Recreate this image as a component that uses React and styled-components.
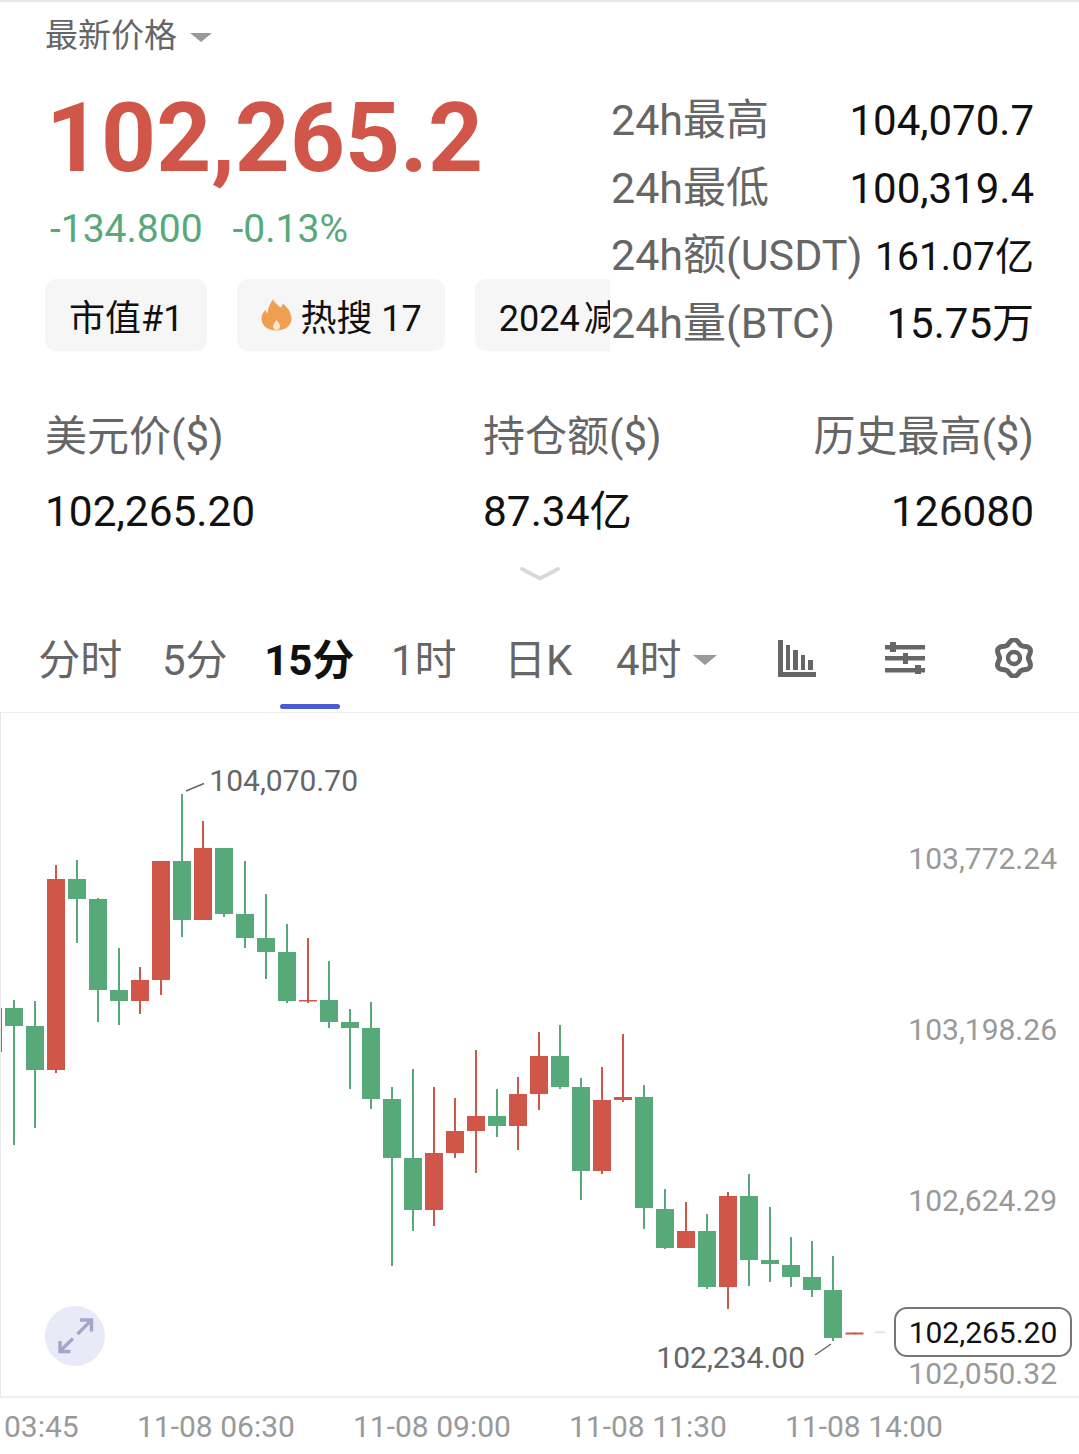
import React from 'react';
import styled, { createGlobalStyle } from 'styled-components';

const GlobalStyle = createGlobalStyle`
  html, body {
    margin: 0;
    padding: 0;
    background: #fff;
  }
  body {
    font-family: Roboto, "Noto Sans CJK SC", sans-serif;
  }
`;

const GREEN = '#58a979';
const RED = '#cf5648';

// x centre, wick top, body top, body bottom, wick bottom
const candles = [
  [-8, 1000, 1008, 1052, 1052, 'r'],
  [13, 1000, 1008, 1026, 1145, 'g'],
  [34, 1001, 1026, 1070, 1128, 'g'],
  [55, 865, 879, 1070, 1073, 'r'],
  [76, 860, 879, 899, 943, 'g'],
  [97, 898, 899, 990, 1022, 'g'],
  [118, 948, 990, 1001, 1025, 'g'],
  [139, 967, 980, 1001, 1014, 'r'],
  [160, 861, 861, 980, 995, 'r'],
  [181, 794, 861, 920, 937, 'g'],
  [202, 821, 848, 920, 920, 'r'],
  [223, 848, 848, 914, 917, 'g'],
  [244, 861, 914, 938, 948, 'g'],
  [265, 894, 938, 952, 979, 'g'],
  [286, 924, 952, 1001, 1003, 'g'],
  [307, 938, 1000, 1001.5, 1003, 'r'],
  [328, 961, 1000, 1022, 1028, 'g'],
  [349, 1009, 1022, 1028, 1089, 'g'],
  [370, 1002, 1028, 1099, 1109, 'g'],
  [391, 1087, 1099, 1158, 1266, 'g'],
  [412, 1069, 1158, 1210, 1231, 'g'],
  [433, 1087, 1153, 1210, 1226, 'r'],
  [454, 1098, 1131, 1153, 1158, 'r'],
  [475, 1050, 1116, 1131, 1173, 'r'],
  [496, 1089, 1116, 1126, 1137, 'g'],
  [517, 1077, 1094, 1126, 1150, 'r'],
  [538, 1032, 1056, 1094, 1110, 'r'],
  [559, 1025, 1056, 1087, 1089, 'g'],
  [580, 1078, 1087, 1171, 1200, 'g'],
  [601, 1067, 1100, 1171, 1174, 'r'],
  [622, 1034, 1097, 1100, 1102, 'r'],
  [643, 1085, 1097, 1208, 1229, 'g'],
  [664, 1189, 1209, 1248, 1249, 'g'],
  [685, 1202, 1231, 1248, 1248, 'r'],
  [706, 1214, 1231, 1287, 1289, 'g'],
  [727, 1192, 1196, 1287, 1309, 'r'],
  [748, 1174, 1196, 1260, 1286, 'g'],
  [769, 1207, 1260, 1264, 1282, 'g'],
  [790, 1237, 1265, 1277, 1287, 'g'],
  [811, 1241, 1277, 1290, 1297, 'g'],
  [832, 1256, 1290, 1338, 1341, 'g'],
  [853.5, 1332.5, 1332.5, 1334.5, 1334.5, 'r'],
];

const gearPath = (() => {
  const pts = [];
  for (let i = 0; i < 72; i++) {
    const a = (i / 72) * Math.PI * 2;
    const r = 16.4 + 2 * Math.cos(6 * a);
    pts.push(`${(20 + r * Math.sin(a)).toFixed(2)} ${(20 - r * Math.cos(a)).toFixed(2)}`);
  }
  return `M${pts.join('L')}Z`;
})();

const Page = styled.div`
  width: 1079px;
  height: 1454px;
  overflow: hidden;
  background: #fff;
  border-top: 2px solid #e8e8e8;
  box-sizing: border-box;
`;

const Header = styled.div`
  display: flex;
  height: 409px;
`;

const PriceColumn = styled.div`
  width: 610px;
  flex-shrink: 0;
  overflow: hidden;
  padding: 11px 0 0 45px;
  box-sizing: border-box;
`;

const PriceLabel = styled.div`
  display: flex;
  align-items: center;
  height: 40px;
  font-size: 33px;
  color: #666;
`;

const Caret = styled.span`
  display: inline-block;
  width: 0;
  height: 0;
  margin-top: ${p => p.$drop}px;
  margin-left: ${p => p.$gap}px;
  border-left: ${p => p.$size}px solid transparent;
  border-right: ${p => p.$size}px solid transparent;
  border-top: ${p => p.$size * 0.85}px solid #999;
`;

const BigPrice = styled.div`
  margin: 29px 0 0 1px;
  font-size: 96px;
  line-height: 112px;
  font-weight: 700;
  color: ${RED};
  white-space: nowrap;
`;

const ChangeRow = styled.div`
  display: flex;
  gap: 30px;
  margin: 12px 0 0 5px;
  font-size: 39px;
  line-height: 46px;
  color: ${GREEN};
`;

const ChipRow = styled.div`
  display: flex;
  gap: 30px;
  margin-top: 27px;
`;

const Chip = styled.div`
  display: flex;
  align-items: center;
  flex-shrink: 0;
  height: 72px;
  padding: 0 24px;
  border-radius: 11px;
  background: #f6f6f6;
  color: #111;
  font-size: 36px;
  white-space: nowrap;
  word-spacing: ${p => p.$tight || 0}px;
`;

const HotChip = styled(Chip)`
  padding: 0 23px 0 24px;
  gap: 8px;
`;

const StatColumn = styled.div`
  flex: 1;
  display: flex;
  flex-direction: column;
  padding: 85px 45px 0 1px;
`;

const StatRow = styled.div`
  display: flex;
  justify-content: space-between;
  align-items: baseline;
  height: 67.5px;
  line-height: 67.5px;
  white-space: nowrap;
`;

const StatLabel = styled.span`
  font-size: 43px;
  color: #666;
`;

const StatValue = styled.span`
  font-size: ${p => p.$size || 42}px;
  color: #111;
`;

const Metrics = styled.div`
  display: grid;
  grid-template-columns: 438px 1fr auto;
  padding: 1px 45px 0;
  row-gap: 25px;
  line-height: 50px;
`;

const MetricLabel = styled.div`
  font-size: 42px;
  color: #666;
  text-align: ${p => p.$align || 'left'};
`;

const MetricValue = styled.div`
  font-size: 42.4px;
  color: #111;
  text-align: ${p => p.$align || 'left'};
`;

const Chevron = styled.div`
  display: flex;
  justify-content: center;
  margin-top: 29px;
  height: 22px;
`;

const TabBar = styled.div`
  display: flex;
  align-items: center;
  height: 112px;
  margin-top: 12px;
  padding-left: 23px;
`;

const Tab = styled.div`
  position: relative;
  width: 114.5px;
  display: flex;
  justify-content: center;
  align-items: center;
  font-size: 42px;
  font-weight: ${p => (p.$active ? 700 : 400)};
  color: ${p => (p.$active ? '#111' : '#666')};
  white-space: nowrap;
`;

const TabMark = styled.span`
  position: absolute;
  left: 50%;
  bottom: -22px;
  width: 60px;
  height: 5px;
  margin-left: -29px;
  border-radius: 3px;
  background: #4a5bd4;
`;

const DropTab = styled(Tab)`
  width: auto;
  margin-left: 20.5px;
`;

const ToolIcons = styled.div`
  display: flex;
  align-items: center;
  margin: 4px 0 0 auto;
  padding-right: 45px;
  gap: 69px;
`;

const Chart = styled.div`
  position: relative;
  height: 683px;
  border-top: 1px solid #eee;
  border-bottom: 2px solid #eee;
  border-left: 1px solid #e8e8e8;
`;

const CandleSvg = styled.svg`
  position: absolute;
  left: -0.5px;
  top: 0;
`;

const PriceTag = styled.span`
  position: absolute;
  right: ${p => p.$right}px;
  top: ${p => p.$top}px;
  font-size: 30px;
  line-height: 36px;
  color: ${p => p.$color || '#999'};
  white-space: nowrap;
`;

const LastPrice = styled.div`
  position: absolute;
  right: 7px;
  top: 594px;
  width: 178px;
  height: 50px;
  box-sizing: border-box;
  display: flex;
  align-items: center;
  justify-content: center;
  border: 2.5px solid #777;
  border-radius: 13px;
  background: #fff;
  color: #111;
  font-size: 30px;
`;

const ExpandButton = styled.div`
  position: absolute;
  left: 44px;
  top: 593px;
  width: 60px;
  height: 60px;
  border-radius: 50%;
  background: #e9eaf8;
  display: flex;
  align-items: center;
  justify-content: center;
`;

const TimeAxis = styled.div`
  display: flex;
  align-items: center;
  height: 56px;
  padding-left: 4px;
  font-size: 30px;
  color: #999;
`;

const TimeLabel = styled.span`
  width: ${p => p.$width}px;
  flex-shrink: 0;
  white-space: nowrap;
`;

const Flame = () => (
  <svg width="31" height="32" viewBox="0 0 31 32">
    <path
      d="M12 0.5C14 4 17 6 19.5 8.5C20.5 7.5 21.5 6.5 22 4.5C26.5 8.5 30.5 13.5 30.5 19.5C30.5 26.5 24.5 31.5 15.5 31.5C6.5 31.5 0.5 26.5 0.5 19.5C0.5 16 2 13.5 4.5 11C5 12.5 5.5 13.5 6.5 14.5C7 9 9 4.5 12 0.5Z"
      fill="#ee9f50"
    />
    <path d="M15.5 21C17.5 23.5 19 25 19 27.5C19 29.5 17.5 31 15.5 31C13.5 31 12 29.5 12 27.5C12 25 14 23.5 15.5 21Z" fill="#fbe6d0" />
  </svg>
);

const BarsIcon = () => (
  <svg width="38" height="37" viewBox="0 0 38 37" fill="#666">
    <path d="M0 0h5v32h33v5H0z" />
    <rect x="8" y="5" width="4" height="25" />
    <rect x="15" y="10" width="5" height="20" />
    <rect x="23" y="15" width="4" height="15" />
    <rect x="30" y="20" width="5" height="10" />
  </svg>
);

const SlidersIcon = () => (
  <svg width="40" height="32" viewBox="0 0 40 32" fill="#666">
    <rect x="0" y="3" width="40" height="4.5" />
    <rect x="0" y="14" width="40" height="4.5" />
    <rect x="0" y="26" width="40" height="4.5" />
    <rect x="5" y="0" width="6" height="10" />
    <rect x="18" y="11" width="5" height="11" />
    <rect x="30" y="23" width="6" height="9" />
  </svg>
);

const GearIcon = () => (
  <svg width="40" height="40" viewBox="0 0 40 40" fill="none" stroke="#666">
    <path d={gearPath} strokeWidth="5" strokeLinejoin="round" />
    <circle cx="20" cy="20" r="6" strokeWidth="4.4" />
  </svg>
);

const ExpandIcon = () => (
  <svg width="60" height="60" viewBox="0 0 60 60" fill="none" stroke="#a4a6c8" strokeWidth="3.4">
    <path d="M15 45L28 32.5M32.5 28L46 14.5" />
    <path d="M15 35V45.5H25.5M35 14H46.5V25.5" />
  </svg>
);

const CandleChart = () => (
  <CandleSvg width="1079" height="683" viewBox="0 713 1079 683">
    {candles.map(([x, wickTop, top, bottom, wickBottom, kind]) => {
      const color = kind === 'r' ? RED : GREEN;
      return (
        <g key={x}>
          <rect x={x - 1} y={wickTop} width="2" height={wickBottom - wickTop} fill={color} />
          <rect x={x - 9} y={top} width="18" height={bottom - top} fill={color} />
        </g>
      );
    })}
    <rect x="874" y="1331.5" width="10" height="1.5" fill="#e0e0e0" />
    <path d="M185 791L203 783.5M814 1355L830 1344" stroke="#666" strokeWidth="1.5" fill="none" />
  </CandleSvg>
);

const App = () => (
  <Page>
    <GlobalStyle />
    <Header>
      <PriceColumn>
        <PriceLabel>
          最新价格
          <Caret $size={11} $gap={13} $drop={8} />
        </PriceLabel>
        <BigPrice>102,265.2</BigPrice>
        <ChangeRow>
          <span>-134.800</span>
          <span>-0.13%</span>
        </ChangeRow>
        <ChipRow>
          <Chip>市值#1</Chip>
          <HotChip>
            <Flame />
            热搜 17
          </HotChip>
          <Chip $tight={-5}>2024 减半</Chip>
        </ChipRow>
      </PriceColumn>
      <StatColumn>
        <StatRow>
          <StatLabel>24h最高</StatLabel>
          <StatValue>104,070.7</StatValue>
        </StatRow>
        <StatRow>
          <StatLabel>24h最低</StatLabel>
          <StatValue>100,319.4</StatValue>
        </StatRow>
        <StatRow>
          <StatLabel>24h额(USDT)</StatLabel>
          <StatValue $size={39}>161.07亿</StatValue>
        </StatRow>
        <StatRow>
          <StatLabel>24h量(BTC)</StatLabel>
          <StatValue>15.75万</StatValue>
        </StatRow>
      </StatColumn>
    </Header>
    <Metrics>
      <MetricLabel>美元价($)</MetricLabel>
      <MetricLabel>持仓额($)</MetricLabel>
      <MetricLabel $align="right">历史最高($)</MetricLabel>
      <MetricValue>102,265.20</MetricValue>
      <MetricValue>87.34亿</MetricValue>
      <MetricValue $align="right">126080</MetricValue>
    </Metrics>
    <Chevron>
      <svg width="42" height="16" viewBox="0 0 42 16" fill="none" stroke="#d9d9d9" strokeWidth="4" strokeLinecap="round" strokeLinejoin="round">
        <path d="M3 3L21 12.5L39 3" />
      </svg>
    </Chevron>
    <TabBar>
      <Tab>分时</Tab>
      <Tab>5分</Tab>
      <Tab $active>
        15分
        <TabMark />
      </Tab>
      <Tab>1时</Tab>
      <Tab>日K</Tab>
      <DropTab>
        4时
        <Caret $size={12} $gap={11} $drop={8} />
      </DropTab>
      <ToolIcons>
        <BarsIcon />
        <SlidersIcon />
        <GearIcon />
      </ToolIcons>
    </TabBar>
    <Chart>
      <CandleChart />
      <PriceTag $right={721} $top={50} $color="#666">104,070.70</PriceTag>
      <PriceTag $right={22} $top={128}>103,772.24</PriceTag>
      <PriceTag $right={22} $top={299}>103,198.26</PriceTag>
      <PriceTag $right={22} $top={470}>102,624.29</PriceTag>
      <PriceTag $right={274} $top={627} $color="#666">102,234.00</PriceTag>
      <LastPrice>102,265.20</LastPrice>
      <PriceTag $right={22} $top={643}>102,050.32</PriceTag>
      <ExpandButton>
        <ExpandIcon />
      </ExpandButton>
    </Chart>
    <TimeAxis>
      <TimeLabel $width={133}>03:45</TimeLabel>
      <TimeLabel $width={216}>11-08 06:30</TimeLabel>
      <TimeLabel $width={216}>11-08 09:00</TimeLabel>
      <TimeLabel $width={216}>11-08 11:30</TimeLabel>
      <TimeLabel $width={216}>11-08 14:00</TimeLabel>
    </TimeAxis>
  </Page>
);

export default App;
